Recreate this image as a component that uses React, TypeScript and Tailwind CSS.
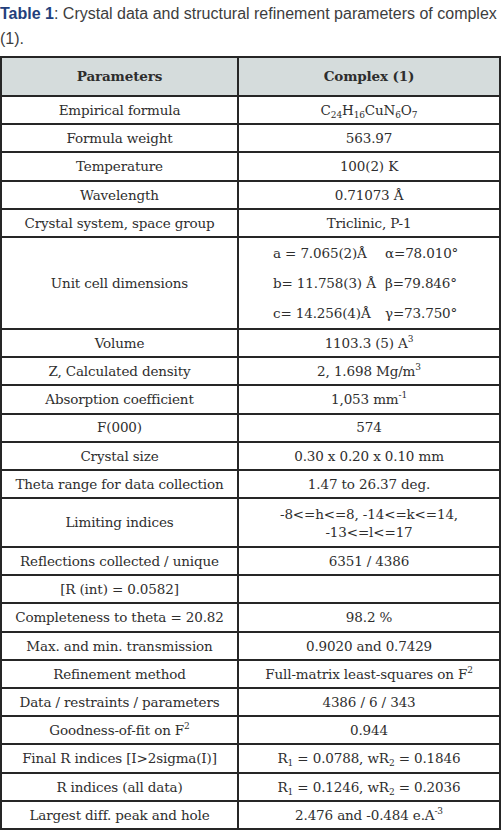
import React from "react";

/* ===============================
   TYPES
=============================== */
type Row = {
  label: React.ReactNode;
  value: React.ReactNode;
  tall?: "cell" | "limits";
};

const Sub = ({ children }: { children: React.ReactNode }) => (
  <span className="relative top-[3px] text-[9px]">{children}</span>
);
const Sup = ({ children }: { children: React.ReactNode }) => (
  <span className="relative -top-[6px] text-[9px]">{children}</span>
);

/* ===============================
   DATA
=============================== */
const rows: Row[] = [
  {
    label: "Empirical formula",
    value: (
      <>
        C<Sub>24</Sub>H<Sub>16</Sub>CuN<Sub>6</Sub>O<Sub>7</Sub>
      </>
    ),
  },
  { label: "Formula weight", value: "563.97" },
  { label: "Temperature", value: "100(2) K" },
  { label: "Wavelength", value: "0.71073 Å" },
  { label: "Crystal system, space group", value: "Triclinic, P-1" },
  { label: "Unit cell dimensions", value: null, tall: "cell" },
  {
    label: "Volume",
    value: (
      <>
        1103.3 (5) A<Sup>3</Sup>
      </>
    ),
  },
  {
    label: "Z, Calculated density",
    value: (
      <>
        2, 1.698 Mg/m<Sup>3</Sup>
      </>
    ),
  },
  {
    label: "Absorption coefficient",
    value: (
      <>
        1,053 mm<Sup>-1</Sup>
      </>
    ),
  },
  { label: "F(000)", value: "574" },
  { label: "Crystal size", value: "0.30 x 0.20 x 0.10 mm" },
  { label: "Theta range for data collection", value: "1.47 to 26.37 deg." },
  { label: "Limiting indices", value: null, tall: "limits" },
  { label: "Reflections collected / unique", value: "6351 / 4386" },
  { label: "[R (int) = 0.0582]", value: "" },
  { label: "Completeness to theta = 20.82", value: "98.2 %" },
  { label: "Max. and min. transmission", value: "0.9020 and 0.7429" },
  {
    label: "Refinement method",
    value: (
      <>
        Full-matrix least-squares on F<Sup>2</Sup>
      </>
    ),
  },
  { label: "Data / restraints / parameters", value: "4386 / 6 / 343" },
  {
    label: (
      <>
        Goodness-of-fit on F<Sup>2</Sup>
      </>
    ),
    value: "0.944",
  },
  {
    label: "Final R indices [I>2sigma(I)]",
    value: (
      <>
        R<Sub>1</Sub> = 0.0788, wR<Sub>2</Sub> = 0.1846
      </>
    ),
  },
  {
    label: "R indices (all data)",
    value: (
      <>
        R<Sub>1</Sub> = 0.1246, wR<Sub>2</Sub> = 0.2036
      </>
    ),
  },
  {
    label: "Largest diff. peak and hole",
    value: (
      <>
        2.476 and -0.484 e.A<Sup>-3</Sup>
      </>
    ),
  },
];

const cellDims = [
  ["a = 7.065(2)Å", "α=78.010°"],
  ["b= 11.758(3) Å", "β=79.846°"],
  ["c= 14.256(4)Å", "γ=73.750°"],
];

export default function App() {
  const td = "border-2 border-[#262626] text-center align-middle";

  return (
    <main className="bg-white w-[501px] min-h-[830px]">
      {/* CAPTION */}
      <p className="font-['Liberation_Sans',Arial,sans-serif] text-[16px] leading-[25px] text-[#3d3d3d] pt-[1px]">
        <b className="text-[#233f7c] font-bold">Table 1</b>: Crystal data and
        structural refinement parameters of complex (1).
      </p>

      {/* ================= TABLE ================= */}
      <table className="mt-[5px] w-[501px] border-collapse table-fixed font-['DejaVu_Serif',serif] text-[13.5px] tracking-[-0.01em] text-[#2e2e2e]">
        <colgroup>
          <col className="w-[237px]" />
          <col />
        </colgroup>
        <thead>
          <tr className="bg-[#d5dcdc]">
            <th className={`${td} px-2 h-[39px] font-bold`}>Parameters</th>
            <th className={`${td} px-2 h-[39px] font-bold`}>Complex (1)</th>
          </tr>
        </thead>
        <tbody>
          {rows.map((r, i) => {
            if (r.tall === "cell") {
              return (
                <tr key={i}>
                  <td className={`${td} px-2 h-[91px]`}>{r.label}</td>
                  <td className={`${td} h-[91px]`}>
                    <div className="ml-[34px] grid grid-cols-[112px_auto] text-left leading-[30px]">
                      {cellDims.map(([a, b]) => (
                        <React.Fragment key={a}>
                          <span>{a}</span>
                          <span>{b}</span>
                        </React.Fragment>
                      ))}
                    </div>
                  </td>
                </tr>
              );
            }
            if (r.tall === "limits") {
              return (
                <tr key={i}>
                  <td className={`${td} px-2 h-[49px]`}>{r.label}</td>
                  <td className={`${td} px-2 h-[49px] leading-[18px]`}>
                    -8&lt;=h&lt;=8, -14&lt;=k&lt;=14,
                    <br />
                    -13&lt;=l&lt;=17
                  </td>
                </tr>
              );
            }
            return (
              <tr key={i}>
                <td className={`${td} px-2 h-[28.2px]`}>{r.label}</td>
                <td className={`${td} px-2 h-[28.2px]`}>{r.value}</td>
              </tr>
            );
          })}
        </tbody>
      </table>
    </main>
  );
}
